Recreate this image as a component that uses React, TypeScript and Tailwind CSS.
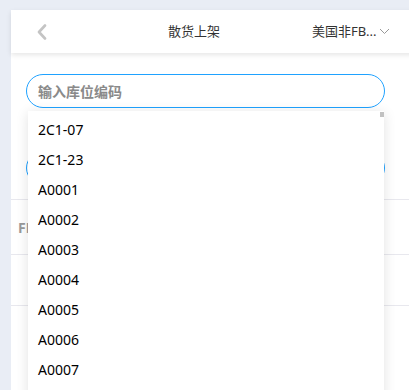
import React from "react";

const items = ["2C1-07", "2C1-23", "A0001", "A0002", "A0003", "A0004", "A0005", "A0006", "A0007", "A0008"];

export default function App() {
  return (
    <div
      className="relative w-[409px] h-[390px] overflow-hidden bg-[#e9edf5] pl-[11px] pt-[10px]"
      style={{ fontFamily: '"Noto Sans", "Noto Sans CJK SC", sans-serif' }}
    >
      <div className="flex h-full w-[420px] flex-col bg-white">
        <div className="relative z-10 flex h-[43px] shrink-0 items-center bg-white shadow-[0_2px_5px_rgba(0,0,0,0.1)]">
          <svg className="ml-[26px]" width="10" height="16" viewBox="0 0 10 16" fill="none">
            <path d="M8 1.5L2 8l6 6.5" stroke="#c4c4c4" strokeWidth="2.6" strokeLinecap="round" strokeLinejoin="round" />
          </svg>
          <div className="absolute left-[157px] top-[10px] text-[13px] leading-[22px] text-[#333]">散货上架</div>
          <div className="absolute left-[301px] top-[10px] flex items-center text-[13px] leading-[22px] text-[#333]">
            <span>美国非FB...</span>
            <svg className="ml-[2px]" width="11" height="7" viewBox="0 0 11 7" fill="none">
              <path d="M1 1l4.5 4.5L10 1" stroke="#999" strokeWidth="1" />
            </svg>
          </div>
        </div>
        <div className="flex flex-1 flex-col">
          <div className="ml-[15px] mt-[21px] flex h-[34px] w-[359px] items-center rounded-full border border-[#1fa2ff] px-[11px]">
            <span className="text-[14px] font-bold text-[#8a8a8a]">输入库位编码</span>
          </div>
          <div className="ml-[15px] mt-[43px] flex h-[34px] w-[359px] items-center rounded-full border border-[#1fa2ff] px-[11px]">
            <span className="text-[14px] font-bold text-[#8a8a8a]">输入商品编码</span>
          </div>
          <div className="mt-[14px] border-t border-[#e8e8ee]">
            <div className="flex h-[55px] items-center border-b border-[#e8e8ee] pl-[7px]">
              <span className="text-[14px] font-bold text-[#999]">FBA仓位</span>
            </div>
            <div className="h-[51px] border-b border-[#e8e8ee]" />
          </div>
        </div>
      </div>
      <div className="absolute left-[28px] top-[111px] h-[300px] w-[356px] bg-white shadow-[0_2px_12px_rgba(0,0,0,0.12)]">
        <div className="absolute right-0 top-[1px] h-[5px] w-[4px] bg-[#c1c1c1]" />
        <div className="pt-[3px]">
          {items.map((t) => (
            <div key={t} className="flex h-[30px] items-center pl-[10px] text-[14px] text-black">
              {t}
            </div>
          ))}
        </div>
      </div>
    </div>
  );
}
